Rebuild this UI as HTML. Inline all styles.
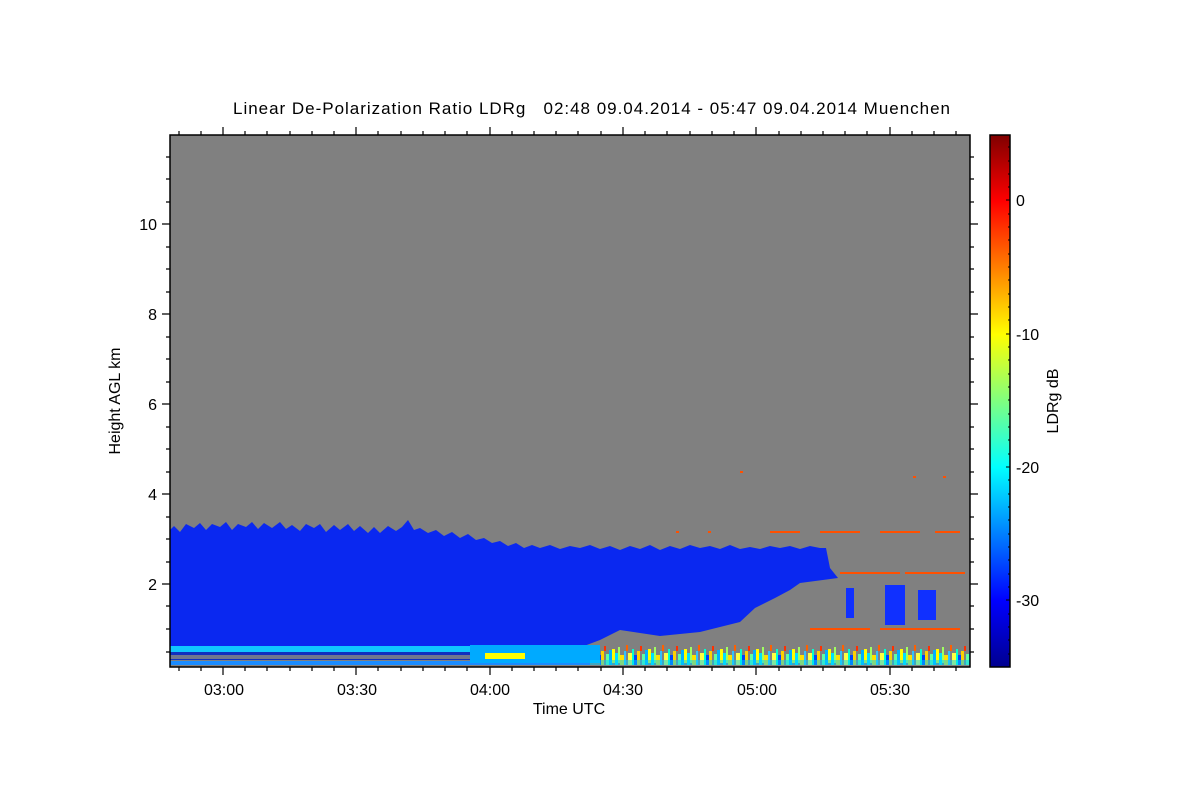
<!DOCTYPE html>
<html><head><meta charset="utf-8"><style>
html,body{margin:0;padding:0;background:#fff;}
svg{display:block;}
text{font-family:"Liberation Sans",sans-serif;fill:#000;}
</style></head><body>
<svg width="1200" height="800" viewBox="0 0 1200 800" xmlns="http://www.w3.org/2000/svg">
<defs>
<linearGradient id="jet" x1="0" y1="1" x2="0" y2="0">
<stop offset="0" stop-color="#00008f"/>
<stop offset="0.125" stop-color="#0000ff"/>
<stop offset="0.375" stop-color="#00ffff"/>
<stop offset="0.625" stop-color="#ffff00"/>
<stop offset="0.875" stop-color="#ff0000"/>
<stop offset="1" stop-color="#800000"/>
</linearGradient>
<pattern id="noise" x="0" y="643" width="36" height="24" patternUnits="userSpaceOnUse">
<rect width="36" height="24" fill="#808080"/>
<rect x="0" y="6" width="3" height="14" fill="#ffff00"/>
<rect x="3" y="10" width="3" height="12" fill="#00e0ff"/>
<rect x="6" y="4" width="2" height="16" fill="#a0ff60"/>
<rect x="8" y="12" width="4" height="10" fill="#ffe000"/>
<rect x="12" y="8" width="2" height="14" fill="#30c0ff"/>
<rect x="14" y="2" width="2" height="6" fill="#ff6000"/>
<rect x="16" y="10" width="4" height="12" fill="#ffff40"/>
<rect x="20" y="6" width="2" height="16" fill="#00ffd0"/>
<rect x="22" y="12" width="3" height="10" fill="#0040ff"/>
<rect x="25" y="8" width="3" height="14" fill="#ffd000"/>
<rect x="28" y="3" width="2" height="5" fill="#ff3000"/>
<rect x="30" y="11" width="3" height="11" fill="#60ffa0"/>
<rect x="33" y="7" width="3" height="15" fill="#00b0ff"/>
</pattern>
</defs>
<rect x="170" y="135" width="800" height="532" fill="#808080"/>
<!-- cloud -->
<polygon fill="#0a28f0" points="170,530 174,526 180,532 186,524 194,528 200,523 206,530 212,524 220,527 226,522 232,530 238,524 246,527 252,522 258,529 264,523 272,528 280,522 286,529 292,525 300,531 306,524 314,528 320,524 326,532 334,525 340,530 348,524 354,531 360,526 368,533 374,527 380,533 388,526 396,531 402,527 408,520 414,530 420,528 428,533 436,530 444,536 452,532 460,538 468,534 476,540 484,538 492,543 500,541 508,546 516,543 524,548 532,545 540,548 550,545 560,549 570,546 580,548 590,545 600,549 610,546 620,550 630,546 640,549 650,545 660,550 670,546 680,549 690,545 700,548 710,546 720,549 730,545 740,549 750,547 760,549 770,546 780,548 790,546 800,549 810,546 820,548 826,548 830,568 838,578 800,583 790,590 775,598 755,608 740,622 700,632 660,636 620,630 600,640 560,655 170,655"/>
<!-- cyan layer low -->
<rect x="170" y="646" width="300" height="6" fill="#10c8ff"/>
<rect x="170" y="652" width="420" height="8" fill="#1030c0"/>
<rect x="170" y="655" width="300" height="4" fill="#707890"/>
<rect x="170" y="661" width="420" height="4" fill="#1a8cff"/>
<rect x="470" y="645" width="130" height="18" fill="#00aaff"/>
<rect x="485" y="653" width="40" height="6" fill="#ffff00"/>
<!-- right isolated blobs -->
<rect x="846" y="588" width="8" height="30" fill="#1030ff"/>
<rect x="885" y="585" width="20" height="40" fill="#1030ff"/>
<rect x="918" y="590" width="18" height="30" fill="#1030ff"/>
<!-- noisy low strip -->
<rect x="600" y="643" width="370" height="24" fill="url(#noise)"/>
<rect x="590" y="660" width="380" height="5" fill="#00d0ff" opacity="0.5"/>
<!-- sparse dots -->
<g fill="#ff5000">
<rect x="676" y="531" width="3" height="2"/><rect x="708" y="531" width="3" height="2"/><rect x="770" y="531" width="30" height="2"/><rect x="820" y="531" width="40" height="2"/><rect x="880" y="531" width="40" height="2"/><rect x="935" y="531" width="25" height="2"/>
<rect x="840" y="572" width="60" height="2"/><rect x="905" y="572" width="60" height="2"/>
<rect x="740" y="471" width="3" height="2"/><rect x="913" y="476" width="3" height="2"/><rect x="943" y="476" width="3" height="2"/>
<rect x="810" y="628" width="60" height="2"/><rect x="880" y="628" width="80" height="2"/>
</g>
<!-- plot frame -->
<rect x="170" y="135" width="800" height="532" fill="none" stroke="#000" stroke-width="1.5"/>
<g stroke="#000" stroke-width="1.2">
<path d="M162 584H170M162 494H170M162 404H170M162 314H170M162 224H170M970 584H978M970 494H978M970 404H978M970 314H978M970 224H978"/>
<path d="M166 652H170M166 629H170M166 606H170M166 562H170M166 539H170M166 517H170M166 472H170M166 449H170M166 427H170M166 382H170M166 359H170M166 337H170M166 292H170M166 269H170M166 247H170M166 202H170M166 179H170M166 157H170
M970 652H974M970 629H974M970 606H974M970 562H974M970 539H974M970 517H974M970 472H974M970 449H974M970 427H974M970 382H974M970 359H974M970 337H974M970 292H974M970 269H974M970 247H974M970 202H974M970 179H974M970 157H974"/>
<path d="M223 667V675M356 667V675M490 667V675M623 667V675M756 667V675M890 667V675M223 135V127M356 135V127M490 135V127M623 135V127M756 135V127M890 135V127"/>
<path d="M179 667V671M201 667V671M245 667V671M267 667V671M290 667V671M312 667V671M334 667V671M378 667V671M401 667V671M423 667V671M445 667V671M467 667V671M512 667V671M534 667V671M556 667V671M578 667V671M601 667V671M645 667V671M667 667V671M690 667V671M712 667V671M734 667V671M779 667V671M801 667V671M823 667V671M845 667V671M867 667V671M912 667V671M934 667V671M956 667V671
M179 135V131M201 135V131M245 135V131M267 135V131M290 135V131M312 135V131M334 135V131M378 135V131M401 135V131M423 135V131M445 135V131M467 135V131M512 135V131M534 135V131M556 135V131M578 135V131M601 135V131M645 135V131M667 135V131M690 135V131M712 135V131M734 135V131M779 135V131M801 135V131M823 135V131M845 135V131M867 135V131M912 135V131M934 135V131M956 135V131"/>
</g>
<g font-size="16" text-anchor="end">
<text x="157" y="590">2</text><text x="157" y="500">4</text><text x="157" y="410">6</text><text x="157" y="320">8</text><text x="157" y="230">10</text>
</g>
<g font-size="16" text-anchor="middle">
<text x="224" y="695">03:00</text><text x="357" y="695">03:30</text><text x="490" y="695">04:00</text><text x="623" y="695">04:30</text><text x="757" y="695">05:00</text><text x="890" y="695">05:30</text>
<text x="569" y="714">Time UTC</text>
<text transform="translate(120,401) rotate(-90)">Height AGL km</text>
<text transform="translate(1058,401) rotate(-90)">LDRg dB</text>
</g>
<text x="233" y="114" font-size="17" xml:space="preserve" style="white-space:pre" textLength="717" lengthAdjust="spacing">Linear De-Polarization Ratio LDRg   02:48 09.04.2014 - 05:47 09.04.2014 Muenchen</text>
<!-- colorbar -->
<rect x="990" y="135" width="20" height="532" fill="url(#jet)" stroke="#000" stroke-width="1.5"/>
<g stroke="#000" stroke-width="1">
<path d="M1006 200H1010M1006 334H1010M1006 467H1010M1006 600H1010M1008 147H1010M1008 161H1010M1008 174H1010M1008 187H1010M1008 214H1010M1008 227H1010M1008 240H1010M1008 254H1010M1008 267H1010M1008 280H1010M1008 294H1010M1008 307H1010M1008 320H1010M1008 347H1010M1008 360H1010M1008 374H1010M1008 387H1010M1008 400H1010M1008 414H1010M1008 427H1010M1008 440H1010M1008 454H1010M1008 480H1010M1008 494H1010M1008 507H1010M1008 520H1010M1008 534H1010M1008 547H1010M1008 560H1010M1008 574H1010M1008 587H1010M1008 614H1010M1008 627H1010M1008 640H1010M1008 654H1010"/>
</g>
<g font-size="16">
<text x="1016" y="206">0</text><text x="1016" y="340">-10</text><text x="1016" y="473">-20</text><text x="1016" y="606">-30</text>
</g>
</svg>
</body></html>
